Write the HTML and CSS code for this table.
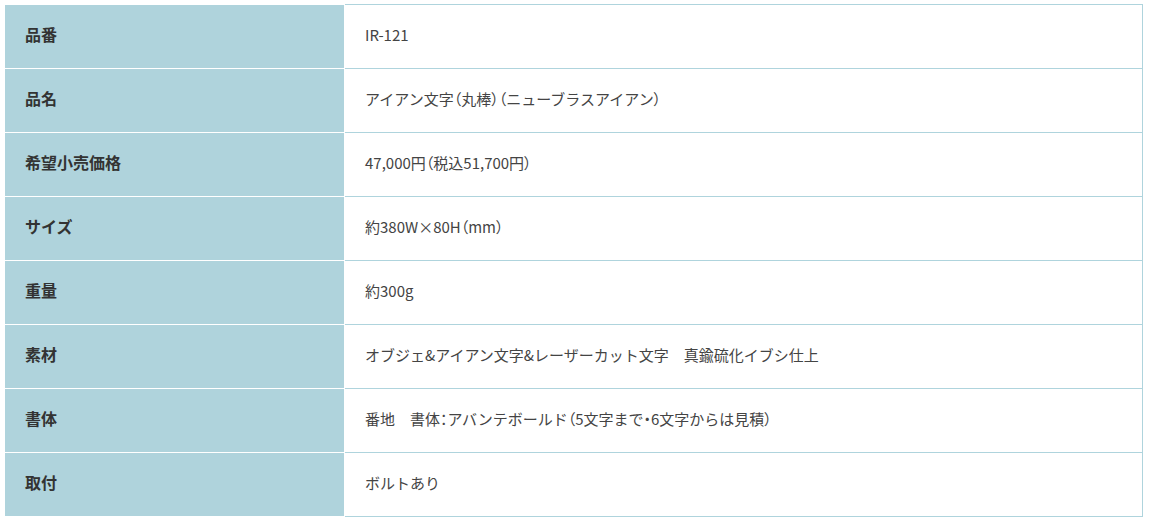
FILE: index.html
```html
<!DOCTYPE html>
<html lang="ja">
<head>
<meta charset="utf-8">
<link rel="stylesheet" href="styles.css">
</head>
<body>
<div class="wrap">
<table class="spec">
<tr><th>品番</th><td>IR-121</td></tr>
<tr><th>品名</th><td>アイアン文字<span class="pp">（</span>丸棒<span class="pp">）（</span>ニューブラスアイアン<span class="pp">）</span></td></tr>
<tr><th>希望小売価格</th><td>47,000円<span class="pp">（</span>税込51,700円<span class="pp">）</span></td></tr>
<tr><th>サイズ</th><td>約380W×80H<span class="pp">（</span>mm<span class="pp">）</span></td></tr>
<tr><th>重量</th><td>約300g</td></tr>
<tr><th>素材</th><td>オブジェ&amp;アイアン文字&amp;レーザーカット文字　真鍮硫化イブシ仕上</td></tr>
<tr><th>書体</th><td>番地　書体<span class="pp">：</span>アバンテボールド<span class="pp">（</span>5文字まで<span class="pp">・</span>6文字からは見積<span class="pp">）</span></td></tr>
<tr><th>取付</th><td>ボルトあり</td></tr>
</table>
</div>
</body>
</html>
```
FILE: styles.css
```css
html, body {
  margin: 0;
  padding: 0;
  background: #fff;
}
.wrap {
  padding: 4px 0 0 4px;
}
.spec {
  width: 1139px;
  border-collapse: collapse;
  font-family: "Noto Sans CJK JP", "Noto Sans", sans-serif;
}
.spec tr {
  height: 64px;
}
.spec th {
  width: 299px;
  background: #afd3dc;
  border: 1px solid #fff;
  text-align: left;
  padding: 0 20px 5px;
  font-size: 16px;
  font-weight: bold;
  color: #333;
  vertical-align: middle;
}
.spec td {
  border: 1px solid #afd4dd;
  padding: 0 20px 5px;
  font-size: 15px;
  color: #444;
  vertical-align: middle;
}
.pp {
  font-feature-settings: "palt";
}
```
